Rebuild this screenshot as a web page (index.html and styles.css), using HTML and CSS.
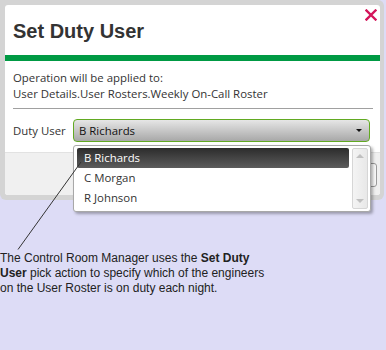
FILE: index.html
```html
<!doctype html>
<html>
<head>
<meta charset='UTF-8'>
<title>Set Duty User</title>
<link rel="stylesheet" href="styles.css">
</head>
<body>
<div class='frame'>
<div class='dialog'>
<div class='head'>
<h1 class='title'>Set Duty User</h1>
<svg class='close' width='12' height='12' viewBox='0 0 12 12'><path d='M1.5 1.5 L10.5 10.5 M10.5 1.5 L1.5 10.5' stroke='#d4145a' stroke-width='2.4' stroke-linecap='square'/></svg>
</div>
<div class='green-bar'></div>
<div class='content'>
<div class='info'>Operation will be applied to:<br>User Details.User Rosters.Weekly On-Call Roster</div>
<div class='rule'></div>
<div class='field-row'>
<span class='field-label'>Duty User</span>
<div class='select'><span>B Richards</span><span class='arrow'></span></div>
</div>
</div>
<div class='footer'><button class='ok'>OK</button></div>
</div>
</div>

<div class='dropdown'>
<div class='items'>
<div class='item selected'>B Richards</div>
<div class='item'>C Morgan</div>
<div class='item'>R Johnson</div>
</div>
<div class='scrollbar'><span class='up'></span><span class='down'></span></div>
</div>

<svg class='callout' width='386' height='350'><line x1='18' y1='249.5' x2='81' y2='162' stroke='#333' stroke-width='1'/></svg>

<p class='caption'>The Control Room Manager uses the <b>Set Duty<br>User</b> pick action to specify which of the engineers<br>on the User Roster is on duty each night.</p>
</body>
</html>
```

FILE: styles.css
```css
body
{
margin: 0;
background-color: #dddcf6;
font-family: "Open Sans", sans-serif;
color: #333;
position: relative;
height: 350px;
overflow: hidden;
}

.frame
{
box-sizing: border-box;
width: 384px;
height: 200px;
padding: 5px 4px 5px 5px;
background-color: #d4d4d4;
border-radius: 0 6px 6px 6px;
}

.dialog
{
height: 100%;
display: flex;
flex-direction: column;
background-color: white;
border-radius: 3px;
overflow: hidden;
}

.head
{
position: relative;
height: 50px;
padding-left: 8px;
}

.title
{
margin: 0;
padding-top: 16px;
font-family: "Liberation Sans", Arial, sans-serif;
font-size: 20px;
line-height: 20px;
font-weight: bold;
color: #333;
}

.close
{
position: absolute;
top: 4px;
right: 3px;
}

.green-bar
{
height: 6px;
background-color: #009a44;
}

.content
{
padding: 9px 7px 10px 8px;
font-size: 11.4px;
}

.info
{
line-height: 16px;
}

.rule
{
margin-top: 6px;
height: 1px;
background-color: #a0a0a0;
}

.field-row
{
margin-top: 10px;
display: flex;
align-items: center;
}

.field-label
{
width: 60px;
}

.select
{
box-sizing: border-box;
width: 297px;
height: 23px;
display: flex;
align-items: center;
justify-content: space-between;
padding: 0 7px 0 5px;
border: 1px solid #62aa22;
border-radius: 4px;
background: linear-gradient(#e6e6e6, #a8a8a8);
color: #111;
}

.arrow
{
width: 0;
height: 0;
border-left: 3px solid transparent;
border-right: 3px solid transparent;
border-top: 3px solid #111;
}

.footer
{
flex: 1;
background-color: #f0f0f0;
border-top: 1px solid #e2e2e2;
display: flex;
justify-content: flex-end;
align-items: flex-start;
padding: 10px 3px 0 0;
}

.ok
{
width: 86px;
height: 24px;
border: 1px solid #9a9a9a;
border-radius: 3px;
background-color: #f8f8f8;
font-family: "Open Sans", sans-serif;
font-size: 12px;
}

.dropdown
{
position: absolute;
left: 73px;
top: 145px;
box-sizing: border-box;
width: 298px;
height: 67px;
display: flex;
padding: 2px 2px 2px 3px;
border: 1px solid #a8a8a8;
border-radius: 3px;
background-color: white;
box-shadow: 2px 2px 3px rgba(0, 0, 0, 0.3);
font-size: 11.4px;
}

.items
{
flex: 1;
margin-right: 3px;
}

.item
{
height: 20px;
line-height: 20px;
padding-left: 7px;
color: #333;
}

.item.selected
{
border-radius: 2px;
background: linear-gradient(#2c2c2c, #5c5c5c);
color: white;
}

.scrollbar
{
position: relative;
width: 14px;
border: 1px solid #d6d6d6;
border-radius: 2px;
background: linear-gradient(to right, #f4f4f4, #e8e8e8);
}

.scrollbar .up, .scrollbar .down
{
position: absolute;
left: 3px;
width: 0;
height: 0;
border-left: 4px solid transparent;
border-right: 4px solid transparent;
}

.scrollbar .up
{
top: 5px;
border-bottom: 4px solid #c0c0c0;
}

.scrollbar .down
{
bottom: 5px;
border-top: 4px solid #c0c0c0;
}

.callout
{
position: absolute;
left: 0;
top: 0;
pointer-events: none;
}

.caption
{
margin: 51px 0 0 0;
font-family: "Liberation Sans", Arial, sans-serif;
font-size: 12px;
line-height: 15px;
color: #222;
}
```
